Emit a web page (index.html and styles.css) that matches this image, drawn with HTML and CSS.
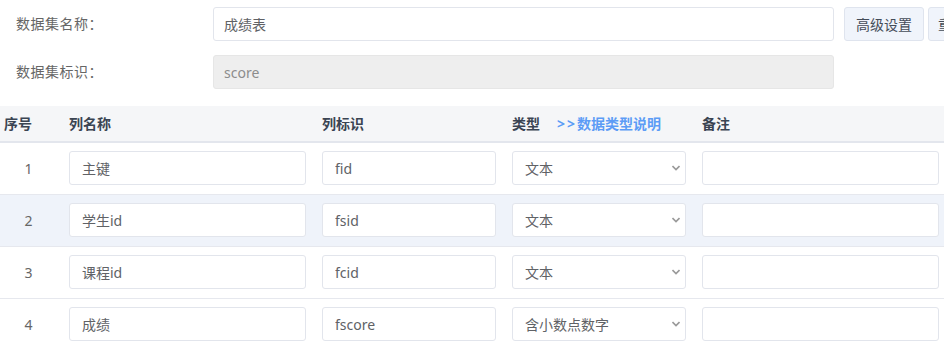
FILE: index.html
```html
<!DOCTYPE html>
<html lang="zh-CN">
<head>
<meta charset="utf-8">
<title>数据集</title>
<link rel="stylesheet" href="styles.css">
</head>
<body>
<div class="page">
  <div class="form-row">
    <label class="form-label">数据集名称：</label>
    <input class="form-input" type="text" value="成绩表">
    <button class="btn">高级设置</button>
    <button class="btn btn-second">重置</button>
  </div>
  <div class="form-row form-row-2">
    <label class="form-label">数据集标识：</label>
    <input class="form-input is-disabled" type="text" value="score" disabled>
  </div>

  <div class="table">
    <div class="thead">
      <div class="th th-no">序号</div>
      <div class="th">列名称</div>
      <div class="th">列标识</div>
      <div class="th th-type">类型 <a class="type-link" href="#"><span class="gt">&gt;&gt;</span>数据类型说明</a></div>
      <div class="th">备注</div>
    </div>

    <div class="tr">
      <div class="td td-no">1</div>
      <div class="td"><input class="cell-input" type="text" value="主键"></div>
      <div class="td"><input class="cell-input" type="text" value="fid"></div>
      <div class="td"><div class="select-wrap"><select class="cell-select"><option>文本</option></select><svg class="arrow" width="8" height="6" viewBox="0 0 8 6"><path d="M0.5 1 L4 4.5 L7.5 1" fill="none" stroke="#999" stroke-width="1.6"/></svg></div></div>
      <div class="td"><input class="cell-input" type="text" value=""></div>
    </div>

    <div class="tr tr-alt">
      <div class="td td-no">2</div>
      <div class="td"><input class="cell-input" type="text" value="学生id"></div>
      <div class="td"><input class="cell-input" type="text" value="fsid"></div>
      <div class="td"><div class="select-wrap"><select class="cell-select"><option>文本</option></select><svg class="arrow" width="8" height="6" viewBox="0 0 8 6"><path d="M0.5 1 L4 4.5 L7.5 1" fill="none" stroke="#999" stroke-width="1.6"/></svg></div></div>
      <div class="td"><input class="cell-input" type="text" value=""></div>
    </div>

    <div class="tr">
      <div class="td td-no">3</div>
      <div class="td"><input class="cell-input" type="text" value="课程id"></div>
      <div class="td"><input class="cell-input" type="text" value="fcid"></div>
      <div class="td"><div class="select-wrap"><select class="cell-select"><option>文本</option></select><svg class="arrow" width="8" height="6" viewBox="0 0 8 6"><path d="M0.5 1 L4 4.5 L7.5 1" fill="none" stroke="#999" stroke-width="1.6"/></svg></div></div>
      <div class="td"><input class="cell-input" type="text" value=""></div>
    </div>

    <div class="tr">
      <div class="td td-no">4</div>
      <div class="td"><input class="cell-input" type="text" value="成绩"></div>
      <div class="td"><input class="cell-input" type="text" value="fscore"></div>
      <div class="td"><div class="select-wrap"><select class="cell-select"><option>含小数点数字</option></select><svg class="arrow" width="8" height="6" viewBox="0 0 8 6"><path d="M0.5 1 L4 4.5 L7.5 1" fill="none" stroke="#999" stroke-width="1.6"/></svg></div></div>
      <div class="td"><input class="cell-input" type="text" value=""></div>
    </div>
  </div>
</div>
</body>
</html>
```

FILE: styles.css
```css
html, body {
  margin: 0;
  padding: 0;
  width: 944px;
  height: 347px;
  overflow: hidden;
  background: #ffffff;
}

body {
  font-family: "Noto Sans", "Noto Sans CJK SC", sans-serif;
  font-size: 14px;
  color: #606266;
}

.page {
  width: 944px;
  padding-top: 7px;
}

.form-row {
  display: flex;
  align-items: center;
  height: 34px;
  white-space: nowrap;
}

.form-row-2 {
  margin-top: 14px;
}

.form-label {
  width: 197px;
  padding-left: 16px;
  flex: none;
  font-size: 14px;
  color: #666666;
  line-height: 20px;
  letter-spacing: 0.5px;
}

.form-input {
  flex: none;
  box-sizing: border-box;
  width: 621px;
  height: 34px;
  border: 1px solid #e2e5ec;
  border-radius: 3px;
  padding: 0 10px;
  font-family: inherit;
  font-size: 14px;
  color: #606266;
  background: #ffffff;
  outline: none;
}

.form-input.is-disabled {
  background: #eeeeee;
  color: #8c8c8c;
  border-color: #e6e6e6;
}

.btn {
  flex: none;
  box-sizing: border-box;
  height: 34px;
  width: 80px;
  margin-left: 10px;
  border: 1px solid #dfe4ee;
  border-radius: 3px;
  background: #f0f4fb;
  color: #444c58;
  font-family: inherit;
  font-size: 14px;
  padding: 0 11px;
  text-align: left;
}

.btn-second {
  margin-left: 4px;
  width: 60px;
  padding: 0 9px;
}

.table {
  margin-top: 17px;
}

.thead,
.tr {
  display: grid;
  grid-template-columns: 53px 237px 174px 174px 237px;
  column-gap: 16px;
  align-items: center;
}

.thead {
  height: 35px;
  background: #f5f6f8;
  border-bottom: 2px solid #e3e6ed;
}

.th {
  font-weight: bold;
  font-size: 14px;
  color: #3a4452;
  line-height: 20px;
  white-space: nowrap;
}

.th-no {
  padding-left: 4px;
}

.th-type {
  display: flex;
  align-items: center;
}

.type-link {
  margin-left: 17px;
  color: #5c9cf6;
  text-decoration: none;
  font-weight: bold;
}

.gt {
  letter-spacing: 2px;
}

.tr {
  box-sizing: border-box;
  height: 52px;
  padding: 8px 0 9px;
  border-bottom: 1px solid #e6e8ee;
}

.tr-alt {
  background: #eff3fa;
}

.td {
  height: 34px;
  display: flex;
  align-items: center;
}

.td-no {
  justify-content: center;
  padding-left: 4px;
  color: #666666;
  font-size: 14px;
}

.cell-input,
.cell-select {
  box-sizing: border-box;
  width: 100%;
  height: 34px;
  border: 1px solid #e2e5ec;
  border-radius: 3px;
  background: #ffffff;
  font-family: inherit;
  font-size: 14px;
  color: #606266;
  padding: 0 12px;
  outline: none;
}

.select-wrap {
  position: relative;
  width: 100%;
  height: 34px;
}

.cell-select {
  appearance: none;
  -webkit-appearance: none;
  padding: 0 24px 0 12px;
}

.arrow {
  position: absolute;
  right: 6px;
  top: 14px;
  pointer-events: none;
}
```
